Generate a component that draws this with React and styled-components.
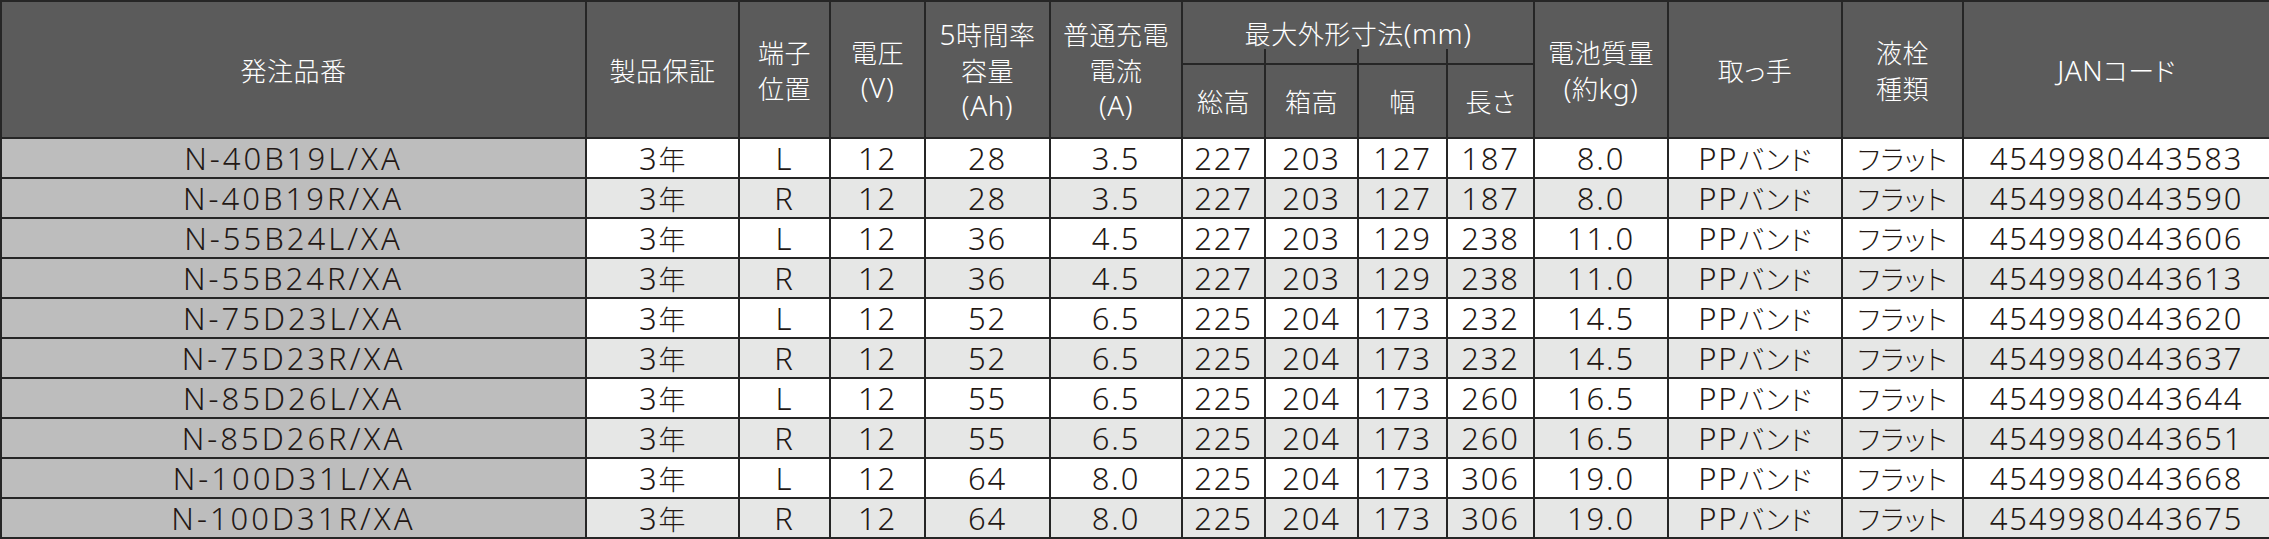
import styled, { createGlobalStyle, css } from "styled-components"

const GlobalStyle = createGlobalStyle`
  html, body { margin:0; padding:0; background:#fff; }
  body { font-family:"Noto Sans", "Noto Sans CJK JP", sans-serif; }
`

const Table = styled.table`
  width:2269px;
  table-layout:fixed;
  border-collapse:collapse;
  border:2px solid #262626;
  border-bottom:none;
  color:#231815;
`

const Th = styled.th`
  position:relative;
  background:#5b5b5b;
  color:#fff;
  font-weight:300;
  font-size:28px;
  line-height:35px;
  letter-spacing:0.5px;
  border:2px solid #262626;
  padding:0;
  height:${p => p.$h}px;
  vertical-align:middle;
  ${p => p.$tick && css`
    &::before{
      content:"";
      position:absolute;
      left:-2px;
      top:-16px;
      width:2px;
      height:15px;
      background:#262626;
    }
  `}
`

const Line = styled.span`
  display:block;
`

const Td = styled.td`
  height:38px;
  padding:0;
  border:2px solid #262626;
  text-align:center;
  vertical-align:middle;
  font-weight:300;
  font-size:31px;
  line-height:36px;
  letter-spacing:${p => (p.$first ? "3px" : "1.8px")};
  background:${p => (p.$first ? "#bdbdbd" : p.$alt ? "#e6e7e6" : "#fff")};
`

const Ja = styled.span`
  font-family:"Noto Sans CJK JP", sans-serif;
  font-size:${p => p.$size || "0.87em"};
  font-feature-settings:"palt";
  letter-spacing:0.5px;
`

const widths = [585, 153, 91, 95, 125, 132, 83, 93, 89, 87, 134, 174, 121, 307]

const rows = [
  ["N-40B19L/XA", "3年", "L", "12", "28", "3.5", "227", "203", "127", "187", "8.0", "PPバンド", "フラット", "4549980443583"],
  ["N-40B19R/XA", "3年", "R", "12", "28", "3.5", "227", "203", "127", "187", "8.0", "PPバンド", "フラット", "4549980443590"],
  ["N-55B24L/XA", "3年", "L", "12", "36", "4.5", "227", "203", "129", "238", "11.0", "PPバンド", "フラット", "4549980443606"],
  ["N-55B24R/XA", "3年", "R", "12", "36", "4.5", "227", "203", "129", "238", "11.0", "PPバンド", "フラット", "4549980443613"],
  ["N-75D23L/XA", "3年", "L", "12", "52", "6.5", "225", "204", "173", "232", "14.5", "PPバンド", "フラット", "4549980443620"],
  ["N-75D23R/XA", "3年", "R", "12", "52", "6.5", "225", "204", "173", "232", "14.5", "PPバンド", "フラット", "4549980443637"],
  ["N-85D26L/XA", "3年", "L", "12", "55", "6.5", "225", "204", "173", "260", "16.5", "PPバンド", "フラット", "4549980443644"],
  ["N-85D26R/XA", "3年", "R", "12", "55", "6.5", "225", "204", "173", "260", "16.5", "PPバンド", "フラット", "4549980443651"],
  ["N-100D31L/XA", "3年", "L", "12", "64", "8.0", "225", "204", "173", "306", "19.0", "PPバンド", "フラット", "4549980443668"],
  ["N-100D31R/XA", "3年", "R", "12", "64", "8.0", "225", "204", "173", "306", "19.0", "PPバンド", "フラット", "4549980443675"],
]

const CJK = /[\u3000-\u30ff\u4e00-\u9fff\uff00-\uffef]/

// CJK runs get the japanese face at a smaller size, latin stays big
const jp = (text, size) =>
  text.split(/([\u3000-\u30ff\u4e00-\u9fff\uff00-\uffef]+)/).map((part, i) =>
    CJK.test(part) ? <Ja key={i} $size={size}>{part}</Ja> : part
  )

const lines = (arr) => arr.map((l, i) => <Line key={i}>{jp(l, "0.93em")}</Line>)

const App = () => {
  return (
    <>
      <GlobalStyle />
      <Table>
        <colgroup>
          {widths.map((w, i) => <col key={i} style={{ width: w }} />)}
        </colgroup>
        <thead>
          <tr>
            <Th rowSpan={2}>{lines(["発注品番"])}</Th>
            <Th rowSpan={2}>{lines(["製品保証"])}</Th>
            <Th rowSpan={2}>{lines(["端子", "位置"])}</Th>
            <Th rowSpan={2}>{lines(["電圧", "(V)"])}</Th>
            <Th rowSpan={2}>{lines(["5時間率", "容量", "(Ah)"])}</Th>
            <Th rowSpan={2}>{lines(["普通充電", "電流", "(A)"])}</Th>
            <Th colSpan={4} $h={61}>{lines(["最大外形寸法(mm)"])}</Th>
            <Th rowSpan={2}>{lines(["電池質量", "(約kg)"])}</Th>
            <Th rowSpan={2}>{lines(["取っ手"])}</Th>
            <Th rowSpan={2}>{lines(["液栓", "種類"])}</Th>
            <Th rowSpan={2}>{lines(["JANコード"])}</Th>
          </tr>
          <tr>
            <Th $h={72}>{lines(["総高"])}</Th>
            <Th $h={72} $tick>{lines(["箱高"])}</Th>
            <Th $h={72} $tick>{lines(["幅"])}</Th>
            <Th $h={72} $tick>{lines(["長さ"])}</Th>
          </tr>
        </thead>
        <tbody>
          {rows.map((r, ri) => (
            <tr key={ri}>
              {r.map((c, ci) => (
                <Td key={ci} $first={ci === 0} $alt={ri % 2 === 1}>{jp(c)}</Td>
              ))}
            </tr>
          ))}
        </tbody>
      </Table>
    </>
  )
}

export default App
